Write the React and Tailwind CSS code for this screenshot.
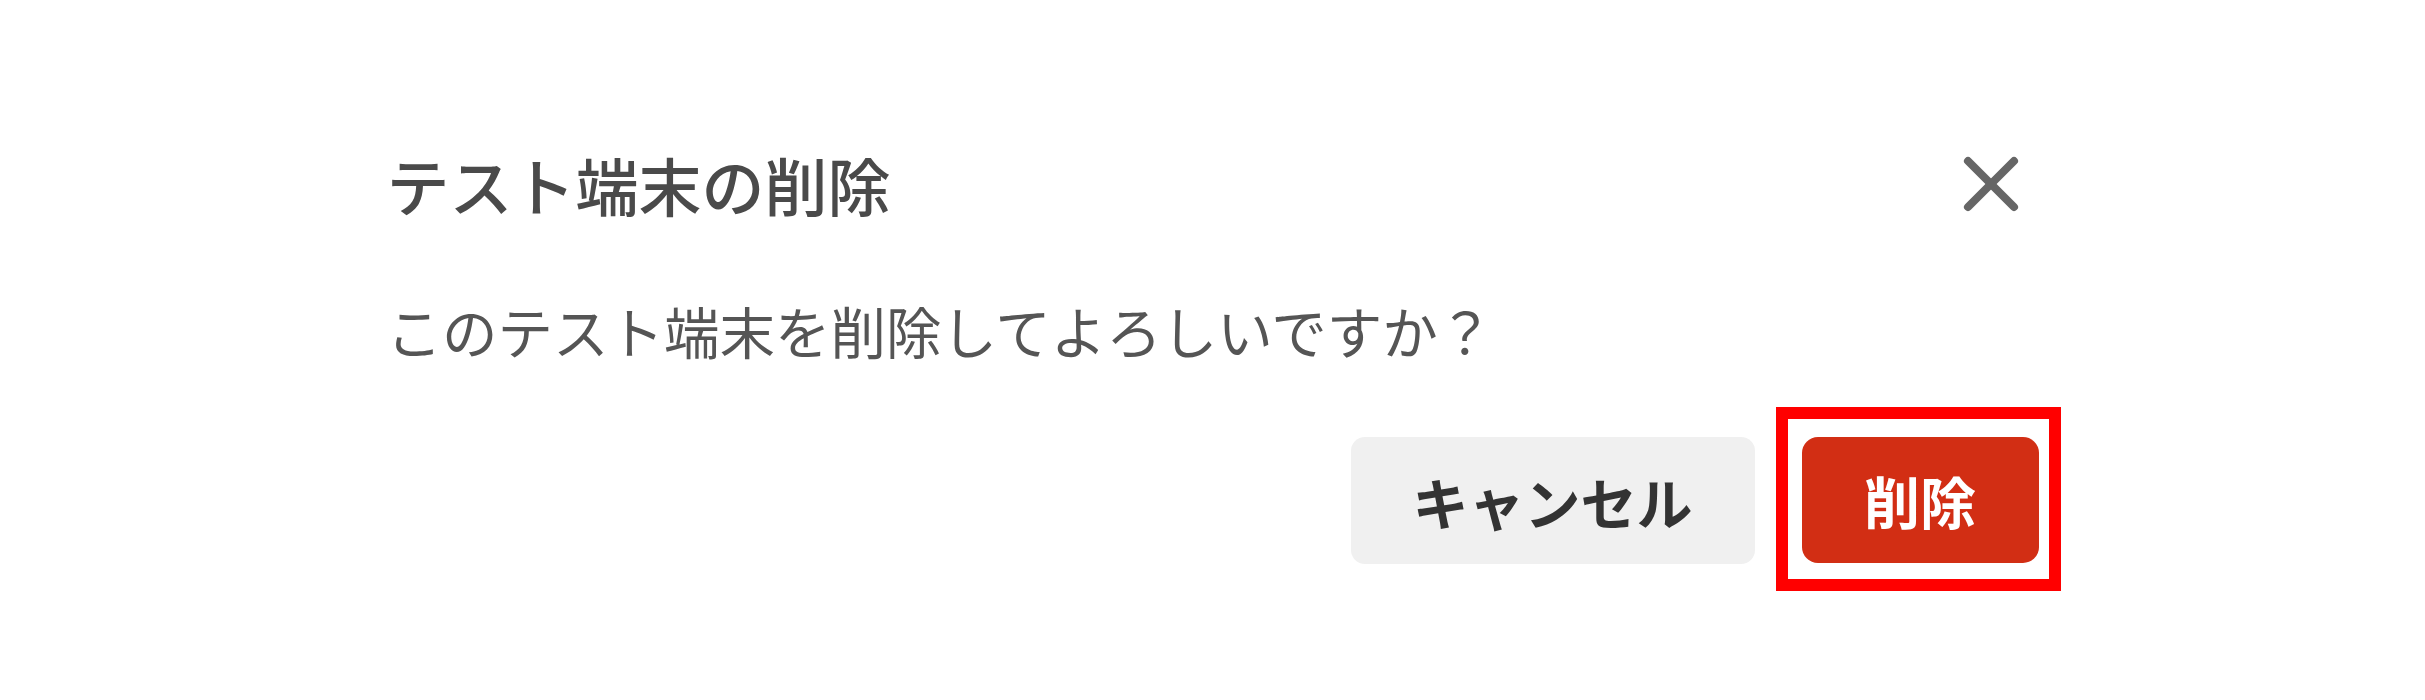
import { X } from 'lucide-react';

const font = { fontFamily: '"Noto Sans CJK JP", "Noto Sans", sans-serif' };

export default function App() {
    return (
        <div className="w-full h-[700px] bg-white flex justify-center" style={font}>
            <div className="w-[1652px] pt-[136px] flex flex-col">
                {/* Header */}
                <div className="h-[96px] flex items-center justify-between">
                    <h2 className="text-[63px] leading-[96px] font-medium text-[#4a4a4a]">テスト端末の削除</h2>
                    <button className="w-[96px] h-[96px] flex items-center justify-center text-[#666666]">
                        <X size={92} strokeWidth={2.1} />
                    </button>
                </div>

                {/* Body */}
                <p className="mt-[58px] text-[55.5px] leading-[80px] font-normal text-[#555555]">
                    このテスト端末を削除してよろしいですか？
                </p>

                {/* Actions */}
                <div className="mt-[67px] flex justify-end gap-[47px]">
                    <button className="w-[404px] h-[127px] rounded-[14px] bg-[#f0f0f0] text-[56px] font-bold text-[#333333] flex items-center justify-center">
                        キャンセル
                    </button>
                    <div className="relative">
                        <button className="w-[237px] h-[126px] rounded-[16px] bg-[#d22e14] text-[56px] font-bold text-white flex items-center justify-center">
                            削除
                        </button>
                        <div className="absolute -left-[26px] -right-[22px] -top-[30px] -bottom-[27px] border-[12px] border-[#ff0000] pointer-events-none" />
                    </div>
                </div>
            </div>
        </div>
    );
}
